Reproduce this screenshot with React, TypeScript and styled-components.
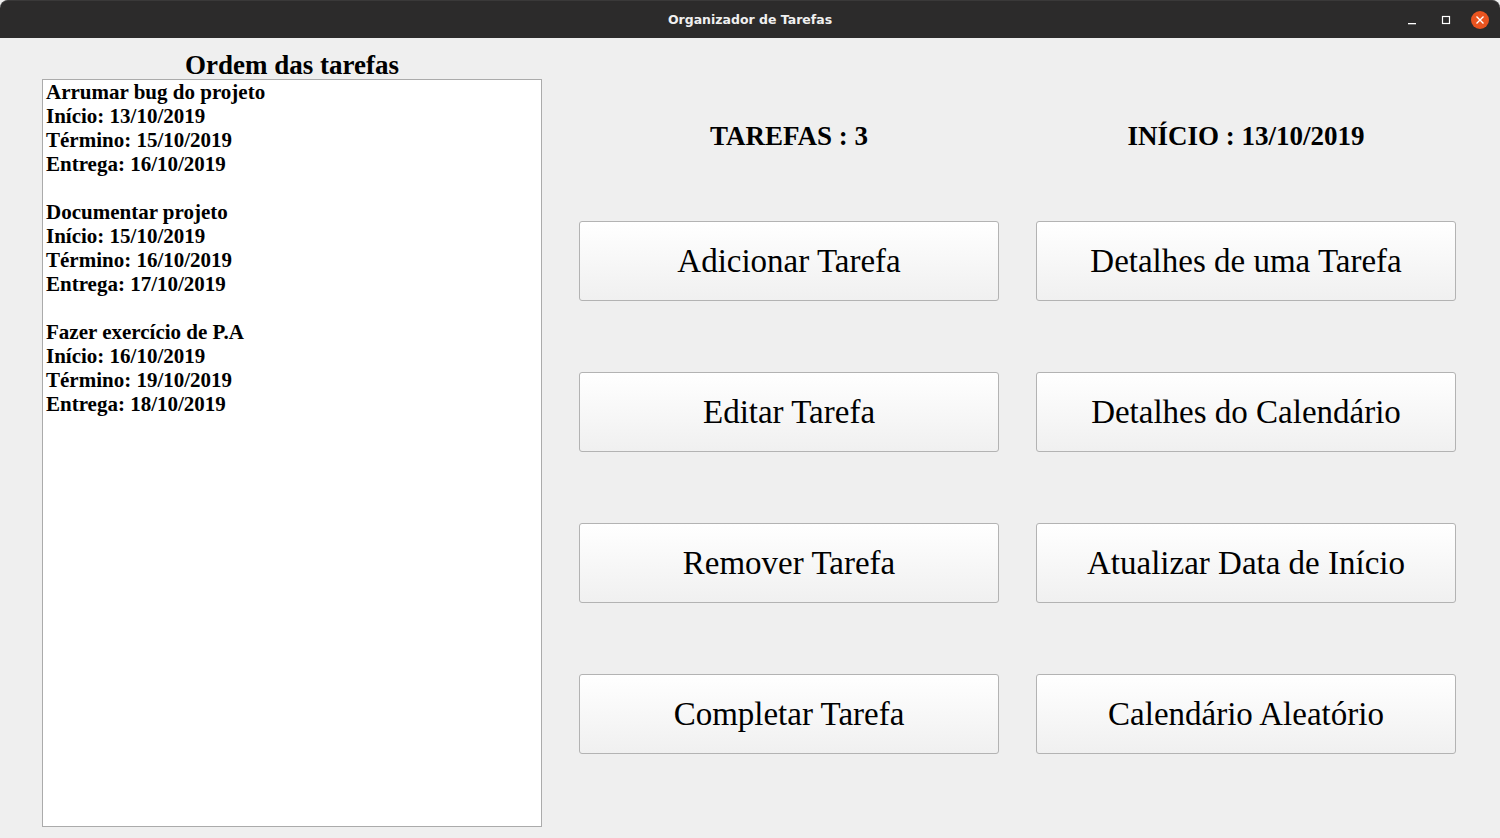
import React from "react";
import styled, { createGlobalStyle } from "styled-components";

const Global = createGlobalStyle`
  html, body { margin: 0; padding: 0; background: #f2f2f2; }
  body { width: 1500px; height: 838px; overflow: hidden; }
`;

const Window = styled.div`
  width: 1500px;
  height: 838px;
  display: flex;
  flex-direction: column;
  background: #efefef;
`;

const TitleBar = styled.div`
  height: 38px;
  flex: 0 0 38px;
  background: #2c2b2b;
  border-radius: 8px 8px 0 0;
  display: flex;
  align-items: center;
  justify-content: center;
  position: relative;
  box-sizing: border-box;
  border-top: 1px solid #3a3939;
`;

const Title = styled.span`
  font-family: "DejaVu Sans", "Noto Sans", sans-serif;
  font-weight: bold;
  font-size: 12.5px;
  color: #f0f0f0;
`;

const Controls = styled.div`
  position: absolute;
  right: 11px;
  top: 0;
  height: 100%;
  display: flex;
  align-items: center;
  gap: 16px;
`;

const CtrlBtn = styled.div`
  width: 18px;
  height: 18px;
  display: flex;
  align-items: center;
  justify-content: center;
`;

const CloseBtn = styled(CtrlBtn)`
  border-radius: 50%;
  background: #e95420;
`;

const Body = styled.div`
  flex: 1;
  display: flex;
  padding: 11px 0 11px 42px;
  gap: 37px;
  box-sizing: border-box;
  min-height: 0;
`;

const LeftCol = styled.div`
  width: 500px;
  display: flex;
  flex-direction: column;
`;

const Heading = styled.div`
  font-family: "Liberation Serif", serif;
  font-weight: bold;
  font-size: 27px;
  line-height: 30px;
  height: 30px;
  padding-top: 1px;
  margin-bottom: -1px;
  text-align: center;
  color: #000;
`;

const ListBox = styled.div`
  flex: 1;
  background: #fff;
  border: 1px solid #ababab;
  padding: 0 3px;
  box-sizing: border-box;
`;

const ListLine = styled.div`
  font-family: "Liberation Serif", serif;
  font-weight: bold;
  font-size: 21px;
  line-height: 24px;
  height: 24px;
  color: #000;
  white-space: pre;
`;

const RightCol = styled.div`
  display: grid;
  grid-template-columns: 420px 420px;
  column-gap: 37px;
  row-gap: 71px;
  align-content: start;
  padding-top: 72px;
`;

const Stat = styled.div`
  font-family: "Liberation Serif", serif;
  font-weight: bold;
  font-size: 27px;
  line-height: 30px;
  text-align: center;
  color: #000;
  margin-bottom: -1px;
`;

const Button = styled.button`
  height: 80px;
  width: 420px;
  border: 1px solid #b3b3b3;
  border-radius: 3px;
  background: linear-gradient(#ffffff, #f0f0f0);
  font-family: "Liberation Serif", serif;
  font-size: 33px;
  color: #000;
  padding: 0;
  cursor: pointer;
`;

const tasks = [
  { name: "Arrumar bug do projeto", ini: "13/10/2019", fim: "15/10/2019", ent: "16/10/2019" },
  { name: "Documentar projeto", ini: "15/10/2019", fim: "16/10/2019", ent: "17/10/2019" },
  { name: "Fazer exercício de P.A", ini: "16/10/2019", fim: "19/10/2019", ent: "18/10/2019" },
];

const buttons = [
  "Adicionar Tarefa",
  "Detalhes de uma Tarefa",
  "Editar Tarefa",
  "Detalhes do Calendário",
  "Remover Tarefa",
  "Atualizar Data de Início",
  "Completar Tarefa",
  "Calendário Aleatório",
];

export default function App() {
  const lines: string[] = [];
  tasks.forEach((t, i) => {
    if (i > 0) lines.push(" ");
    lines.push(t.name, `Início: ${t.ini}`, `Término: ${t.fim}`, `Entrega: ${t.ent}`);
  });
  return (
    <Window>
      <Global />
      <TitleBar>
        <Title>Organizador de Tarefas</Title>
        <Controls>
          <CtrlBtn>
            <svg width="10" height="10" viewBox="0 0 10 10">
              <rect x="1" y="8" width="8" height="1.3" fill="#fff" />
            </svg>
          </CtrlBtn>
          <CtrlBtn>
            <svg width="10" height="10" viewBox="0 0 10 10">
              <rect x="1.5" y="1.5" width="7" height="7" fill="none" stroke="#fff" strokeWidth="1.2" />
            </svg>
          </CtrlBtn>
          <CloseBtn>
            <svg width="10" height="10" viewBox="0 0 10 10">
              <path d="M1.5 1.5 L8.5 8.5 M8.5 1.5 L1.5 8.5" stroke="#fff" strokeWidth="1.4" />
            </svg>
          </CloseBtn>
        </Controls>
      </TitleBar>
      <Body>
        <LeftCol>
          <Heading>Ordem das tarefas</Heading>
          <ListBox>
            {lines.map((l, i) => (
              <ListLine key={i}>{l}</ListLine>
            ))}
          </ListBox>
        </LeftCol>
        <RightCol>
          <Stat>TAREFAS : 3</Stat>
          <Stat>INÍCIO : 13/10/2019</Stat>
          {buttons.map((b) => (
            <Button key={b}>{b}</Button>
          ))}
        </RightCol>
      </Body>
    </Window>
  );
}
